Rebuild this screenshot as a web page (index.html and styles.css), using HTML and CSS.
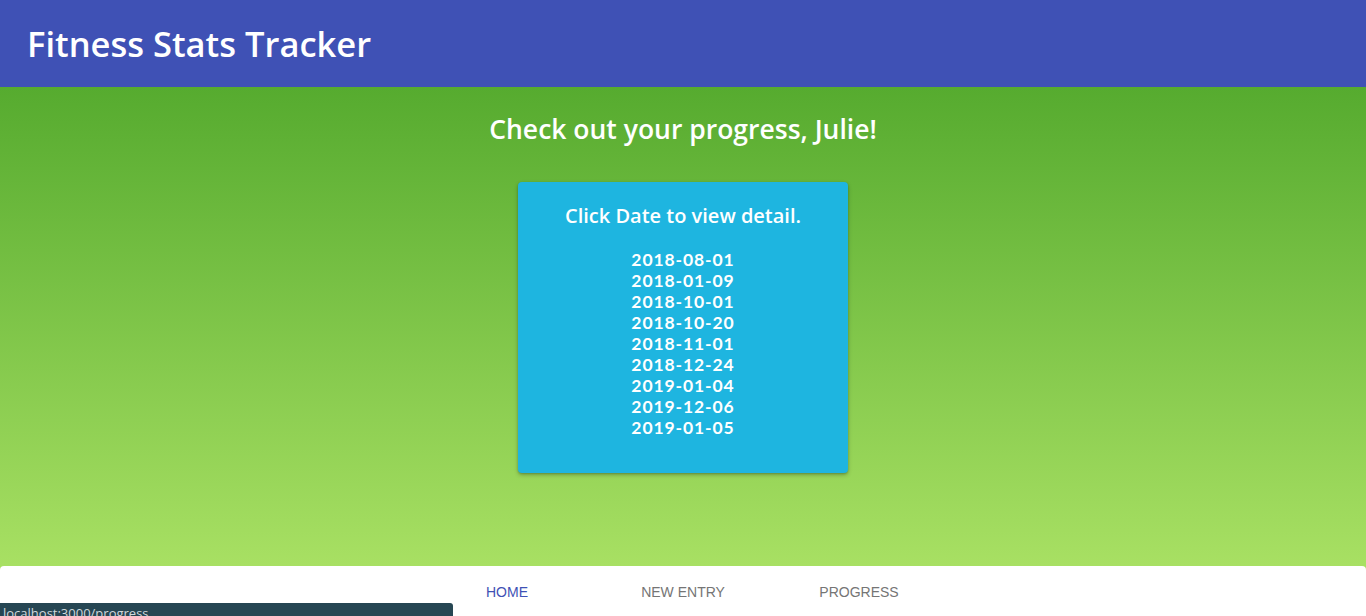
FILE: index.html
```html
<!DOCTYPE html>
<html>
<head>
<meta charset="utf-8">
<link rel="stylesheet" href="styles.css">
</head>
<body>
<header class="topbar">
  <h1 class="brand">Fitness Stats Tracker</h1>
</header>
<main class="main">
  <h2 class="greeting">Check out your progress, Julie!</h2>
  <section class="card">
    <h3 class="card-title">Click Date to view detail.</h3>
    <ul class="dates">
      <li>2018-08-01</li>
      <li>2018-01-09</li>
      <li>2018-10-01</li>
      <li>2018-10-20</li>
      <li>2018-11-01</li>
      <li>2018-12-24</li>
      <li>2019-01-04</li>
      <li>2019-12-06</li>
      <li>2019-01-05</li>
    </ul>
  </section>
</main>
<nav class="bottom-nav">
  <a class="nav-item active">HOME</a>
  <a class="nav-item">NEW ENTRY</a>
  <a class="nav-item">PROGRESS</a>
</nav>
<div class="status">localhost:3000/progress</div>
</body>
</html>
```
FILE: styles.css
```css
html, body {
  margin: 0;
  padding: 0;
  height: 100%;
  overflow: hidden;
}
body {
  font-family: "Open Sans", "DejaVu Sans", sans-serif;
  background-color: #a8e063;
  display: flex;
  flex-direction: column;
}
.topbar {
  background: #3f51b5;
  height: 87px;
  flex: none;
  display: flex;
  align-items: center;
  padding-left: 27px;
}
.brand {
  margin: 0;
  color: #fff;
  font-size: 34.5px;
  font-weight: 600;
}
.main {
  height: 479px;
  flex: none;
  background: linear-gradient(#56ab2f, #a8e063);
  display: flex;
  flex-direction: column;
  align-items: center;
  color: #fff;
}
.greeting {
  margin: 25px 0 0;
  font-size: 26.5px;
  font-weight: 600;
  line-height: 34px;
}
.card {
  margin-top: 36px;
  width: 330px;
  height: 291px;
  box-sizing: border-box;
  background: #1eb5e0;
  border-radius: 4px;
  box-shadow: 0 2px 4px rgba(0,0,0,0.25), 0 1px 2px rgba(0,0,0,0.15);
  text-align: center;
  padding-top: 21px;
}
.card-title {
  margin: 0;
  font-size: 20px;
  font-weight: 600;
  line-height: 26px;
}
.dates {
  list-style: none;
  margin: 20px 0 0;
  padding: 0;
  font-family: Lato, "Open Sans", sans-serif;
  font-size: 17.5px;
  font-weight: 700;
  letter-spacing: 0.9px;
  line-height: 21px;
}
.bottom-nav {
  flex: none;
  height: 56px;
  background: #fff;
  border-radius: 4px 4px 0 0;
  display: flex;
  justify-content: center;
}
.nav-item {
  width: 176px;
  text-align: center;
  font-family: "Liberation Sans", Arial, sans-serif;
  font-size: 14px;
  color: #757575;
  padding-top: 18px;
  box-sizing: border-box;
}
.nav-item.active {
  color: #3f51b5;
}
.status {
  position: fixed;
  left: 0;
  bottom: -8px;
  width: 453px;
  height: 21px;
  box-sizing: border-box;
  background: #264653;
  border-top-right-radius: 3px;
  color: #cfd8dc;
  font-family: "Open Sans", sans-serif;
  font-size: 13px;
  line-height: 21px;
  padding-left: 3px;
}
```
